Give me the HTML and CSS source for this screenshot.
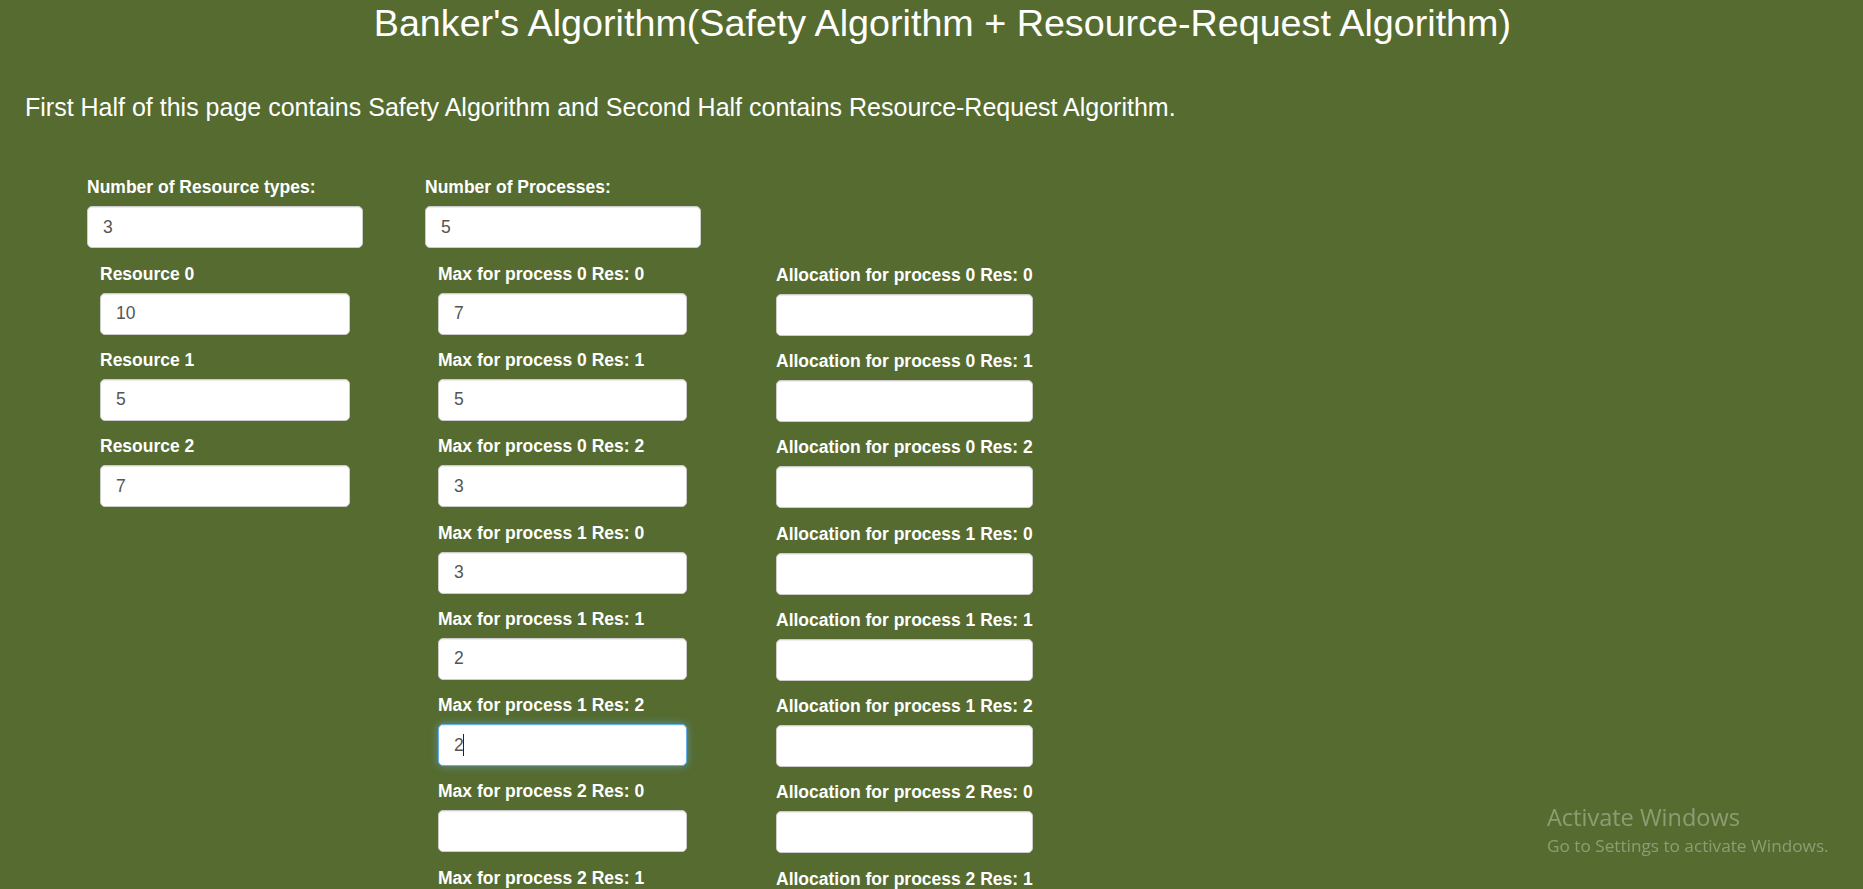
FILE: index.html
```html
<!DOCTYPE html>
<html lang="en">
<head>
<meta charset="utf-8">
<title>Banker's Algorithm</title>
<link rel="stylesheet" href="styles.css">
</head>
<body>
<h1 class="title">Banker's Algorithm(Safety Algorithm + Resource-Request Algorithm)</h1>
<p class="intro">First Half of this page contains Safety Algorithm and Second Half contains Resource-Request Algorithm.</p>

<form class="safety">
  <div class="col col-resources">
    <div class="group">
      <label class="lbl">Number of Resource types:</label>
      <input class="field" type="text" value="3">
    </div>
    <div class="nested">
      <div class="group"><label class="lbl">Resource 0</label><input class="field" type="text" value="10"></div>
      <div class="group"><label class="lbl">Resource 1</label><input class="field" type="text" value="5"></div>
      <div class="group"><label class="lbl">Resource 2</label><input class="field" type="text" value="7"></div>
    </div>
  </div>

  <div class="col col-processes">
    <div class="group wide">
      <label class="lbl">Number of Processes:</label>
      <input class="field" type="text" value="5">
    </div>
    <div class="matrix">
      <div class="sub sub-max">
        <div class="group"><label class="lbl">Max for process 0 Res: 0</label><input class="field" type="text" value="7"></div>
        <div class="group"><label class="lbl">Max for process 0 Res: 1</label><input class="field" type="text" value="5"></div>
        <div class="group"><label class="lbl">Max for process 0 Res: 2</label><input class="field" type="text" value="3"></div>
        <div class="group"><label class="lbl">Max for process 1 Res: 0</label><input class="field" type="text" value="3"></div>
        <div class="group"><label class="lbl">Max for process 1 Res: 1</label><input class="field" type="text" value="2"></div>
        <div class="group"><label class="lbl">Max for process 1 Res: 2</label><div class="caret-wrap"><input class="field is-focus" type="text" value="2"></div></div>
        <div class="group"><label class="lbl">Max for process 2 Res: 0</label><input class="field" type="text" value=""></div>
        <div class="group"><label class="lbl">Max for process 2 Res: 1</label><input class="field" type="text" value=""></div>
        <div class="group"><label class="lbl">Max for process 2 Res: 2</label><input class="field" type="text" value=""></div>
        <div class="group"><label class="lbl">Max for process 3 Res: 0</label><input class="field" type="text" value=""></div>
        <div class="group"><label class="lbl">Max for process 3 Res: 1</label><input class="field" type="text" value=""></div>
        <div class="group"><label class="lbl">Max for process 3 Res: 2</label><input class="field" type="text" value=""></div>
        <div class="group"><label class="lbl">Max for process 4 Res: 0</label><input class="field" type="text" value=""></div>
        <div class="group"><label class="lbl">Max for process 4 Res: 1</label><input class="field" type="text" value=""></div>
        <div class="group"><label class="lbl">Max for process 4 Res: 2</label><input class="field" type="text" value=""></div>
      </div>
      <div class="sub sub-alloc">
        <div class="group"><label class="lbl">Allocation for process 0 Res: 0</label><input class="field" type="text" value=""></div>
        <div class="group"><label class="lbl">Allocation for process 0 Res: 1</label><input class="field" type="text" value=""></div>
        <div class="group"><label class="lbl">Allocation for process 0 Res: 2</label><input class="field" type="text" value=""></div>
        <div class="group"><label class="lbl">Allocation for process 1 Res: 0</label><input class="field" type="text" value=""></div>
        <div class="group"><label class="lbl">Allocation for process 1 Res: 1</label><input class="field" type="text" value=""></div>
        <div class="group"><label class="lbl">Allocation for process 1 Res: 2</label><input class="field" type="text" value=""></div>
        <div class="group"><label class="lbl">Allocation for process 2 Res: 0</label><input class="field" type="text" value=""></div>
        <div class="group"><label class="lbl">Allocation for process 2 Res: 1</label><input class="field" type="text" value=""></div>
        <div class="group"><label class="lbl">Allocation for process 2 Res: 2</label><input class="field" type="text" value=""></div>
        <div class="group"><label class="lbl">Allocation for process 3 Res: 0</label><input class="field" type="text" value=""></div>
        <div class="group"><label class="lbl">Allocation for process 3 Res: 1</label><input class="field" type="text" value=""></div>
        <div class="group"><label class="lbl">Allocation for process 3 Res: 2</label><input class="field" type="text" value=""></div>
        <div class="group"><label class="lbl">Allocation for process 4 Res: 0</label><input class="field" type="text" value=""></div>
        <div class="group"><label class="lbl">Allocation for process 4 Res: 1</label><input class="field" type="text" value=""></div>
        <div class="group"><label class="lbl">Allocation for process 4 Res: 2</label><input class="field" type="text" value=""></div>
      </div>
    </div>
  </div>
</form>

<div class="activate">
  <div class="activate-title">Activate Windows</div>
  <div class="activate-sub">Go to Settings to activate Windows.</div>
</div>
</body>
</html>
```

FILE: styles.css
```css
html {
  scrollbar-width: none;
}
html::-webkit-scrollbar {
  display: none;
}

body {
  margin: 0;
  background: #556b2f;
  color: #fff;
  font-family: "Liberation Sans", Arial, sans-serif;
}

.title {
  margin: 0;
  padding: 2.5px 0 0 21.8px;
  font-size: 37.7px;
  font-weight: normal;
  line-height: 40px;
  text-align: center;
}

.intro {
  margin: 49.3px 0 0;
  padding-left: 25px;
  font-size: 25px;
  line-height: 30px;
}

.safety {
  display: flex;
  align-items: flex-start;
  gap: 62px;
  margin-top: 55.4px;
  padding-left: 87px;
}

.col {
  width: 276px;
}

.col-processes {
  width: auto;
}

.wide {
  width: 276px;
}

.group {
  margin-bottom: 15.33px;
}

.lbl {
  display: block;
  margin-bottom: 9px;
  font-size: 17.5px;
  font-weight: bold;
  line-height: 20px;
  white-space: nowrap;
}

.field {
  display: block;
  box-sizing: border-box;
  width: 100%;
  height: 42px;
  margin: 0;
  padding: 0 15px;
  border: 1px solid #ccc;
  border-radius: 5px;
  background: #fff;
  color: #555;
  font: 17.5px "Liberation Sans", Arial, sans-serif;
  box-shadow: inset 0 1px 1px rgba(0, 0, 0, 0.075);
  outline: none;
}

.field.is-focus {
  border-color: #66afe9;
  box-shadow: inset 0 1px 1px rgba(0, 0, 0, 0.075), 0 0 8px rgba(102, 175, 233, 0.6);
}

.caret-wrap {
  position: relative;
}

.caret-wrap::after {
  content: "";
  position: absolute;
  left: 25px;
  top: 10px;
  width: 1px;
  height: 22px;
  background: #222;
}

.nested {
  width: 250px;
  padding-left: 13px;
}

.matrix {
  display: flex;
  align-items: flex-start;
}

.sub-max {
  width: 249px;
  margin-left: 13px;
}

.sub-alloc {
  width: max-content;
  min-width: 256px;
  margin-top: 1px;
  margin-left: 89px;
}

.activate {
  position: fixed;
  left: 1547px;
  top: 802px;
  color: rgba(255, 255, 255, 0.33);
  font-family: "Open Sans", "Noto Sans", sans-serif;
}

.activate-title {
  font-size: 23.5px;
  line-height: 30px;
}

.activate-sub {
  margin-top: 3px;
  font-size: 17.2px;
  line-height: 22px;
}
```
